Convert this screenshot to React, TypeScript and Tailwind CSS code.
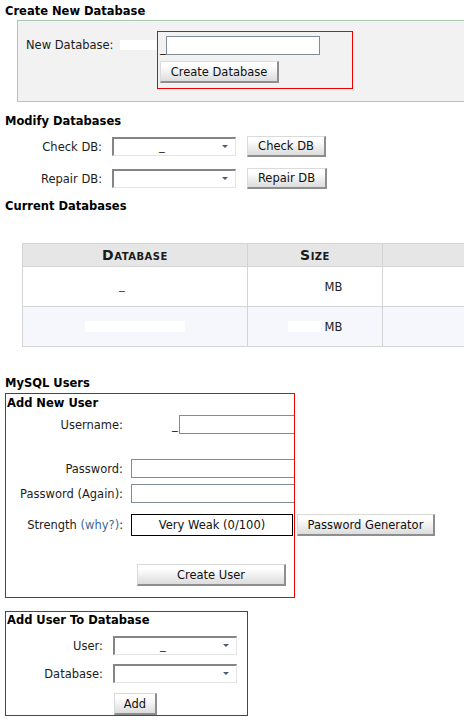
import type { ReactNode } from "react";

function Btn({ className, children }: { className: string; children: ReactNode }) {
  return (
    <button
      type="button"
      className={`flex shrink-0 items-center justify-center bg-linear-to-b from-white from-20% to-[#dcdcdc] border border-[#dadada] border-r-2 border-b-2 border-r-[#8e8e8e] border-b-[#8e8e8e] text-[11.5px] leading-[14px] text-[#111] whitespace-nowrap ${className}`}
    >
      {children}
    </button>
  );
}

function Select({ mark }: { mark?: boolean }) {
  return (
    <div className="relative w-[124px] h-[19px] shrink-0 bg-white border-t-2 border-l-2 border-r border-b border-t-[#858585] border-l-[#858585] border-r-[#e4e4e4] border-b-[#e4e4e4]">
      {mark && <span className="absolute left-[45px] top-[0px] text-[11.5px] leading-[14px] text-[#333]">_</span>}
      <svg className="absolute right-[7px] top-[6px]" width="6" height="3" viewBox="0 0 6 3">
        <path d="M0 0h6L3 3z" fill="#4d5a74" />
      </svg>
    </div>
  );
}

function Field({ className }: { className: string }) {
  return <div className={`h-[19px] shrink-0 bg-white border border-[#7f8b97] ${className}`} />;
}

export default function App() {
  return (
    <div className="w-[464px] min-h-[720px] overflow-hidden bg-white pl-[5px] font-['DejaVu_Sans',sans-serif] text-[11.5px] leading-[14px] text-[#1c1c1c]">
      {/* Create New Database */}
      <h2 className="pt-[4px] font-bold text-black">Create New Database</h2>
      <div className="mt-[2px] ml-[12px] w-[470px] h-[82px] border border-[#a9c9b1] bg-[#f2f2f2] pt-[10px] pl-[8px] flex items-start">
        <div className="w-[131px] shrink-0 mt-[7px] flex items-center">
          <span className="whitespace-nowrap">New Database:</span>
          <span className="ml-[6px] w-[37px] h-[10px] bg-white" />
        </div>
        <div className="w-[196px] h-[58px] shrink-0 border border-solid border-[#ee0000] pt-[4px] pl-[2px]">
          <div className="flex items-end">
            <span className="text-[#222]">_</span>
            <Field className="w-[154px]" />
          </div>
          <Btn className="mt-[6px] w-[119px] h-[22px]">Create Database</Btn>
        </div>
      </div>

      {/* Modify Databases */}
      <h2 className="mt-[12px] font-bold text-black">Modify Databases</h2>
      <div className="mt-[8px] flex items-center h-[21px]">
        <span className="w-[97px] shrink-0 text-right whitespace-nowrap">Check DB:</span>
        <div className="ml-[10px]"><Select mark /></div>
        <Btn className="ml-[11px] w-[79px] h-[21px]">Check DB</Btn>
      </div>
      <div className="mt-[11px] flex items-center h-[21px]">
        <span className="w-[97px] shrink-0 text-right whitespace-nowrap">Repair DB:</span>
        <div className="ml-[10px]"><Select /></div>
        <Btn className="ml-[11px] w-[80px] h-[21px]">Repair DB</Btn>
      </div>

      {/* Current Databases */}
      <h2 className="mt-[10px] font-bold text-black">Current Databases</h2>
      <div className="mt-[30px] ml-[17px] w-[480px] border-t border-l border-[#d4d4d4] grid grid-cols-[225px_135px_120px]">
        {["Database", "Size", ""].map((h) => (
          <div
            key={h || "x"}
            className="h-[23px] bg-[#e6e6e6] border-r border-b border-[#d4d4d4] flex items-center justify-center font-bold text-[14px] tracking-[0.5px] [font-variant:small-caps] text-[#1a1a1a]"
          >
            {h}
          </div>
        ))}
        {["bg-white", "bg-[#f5f7fc]"].map((bg, i) => (
          <div key={bg} className="contents">
            <div className={`h-[40px] border-r border-b border-[#d4d4d4] flex items-center justify-center ${bg}`}>
              <span className="relative w-[100px] h-[11px] bg-white">
                {i === 0 && <span className="absolute left-[34px] -top-[3px] text-[#444]">_</span>}
              </span>
            </div>
            <div className={`h-[40px] border-r border-b border-[#d4d4d4] flex items-center justify-center ${bg}`}>
              <span className="w-[33px] h-[11px] bg-white" />
              <span className="ml-[4px] text-[#222]">MB</span>
            </div>
            <div className={`h-[40px] border-r border-b border-[#d4d4d4] ${bg}`} />
          </div>
        ))}
      </div>

      {/* MySQL Users */}
      <h2 className="mt-[29px] font-bold text-black">MySQL Users</h2>
      <div className="mt-[3px] w-[290px] h-[205px] border border-solid border-[#ee0000] pt-[2px] pl-[1px]">
        <h3 className="font-bold text-black">Add New User</h3>
        <div className="mt-[5px] flex items-center">
          <span className="w-[116px] shrink-0 text-right whitespace-nowrap">Username:</span>
          <span className="ml-[8px] w-[41px] shrink-0" />
          <span className="text-[#222]">_</span>
          <Field className="ml-[1px] w-[115px] border-r-0" />
        </div>
        <div className="mt-[25px] flex items-center">
          <span className="w-[116px] shrink-0 text-right whitespace-nowrap">Password:</span>
          <Field className="ml-[8px] w-[163px] border-r-0" />
        </div>
        <div className="mt-[6px] flex items-center">
          <span className="w-[116px] shrink-0 text-right whitespace-nowrap">Password (Again):</span>
          <Field className="ml-[8px] w-[163px] border-r-0" />
        </div>
        <div className="mt-[11px] flex items-center h-[22px]">
          <span className="w-[116px] shrink-0 text-right whitespace-nowrap">
            Strength <span className="text-[#3a6a96]">(why?)</span>:
          </span>
          <div className="ml-[8px] w-[162px] h-[22px] shrink-0 border border-black bg-white flex items-center justify-center text-[#111] whitespace-nowrap">
            Very Weak (0/100)
          </div>
          <Btn className="ml-[4px] w-[138px] h-[22px]">Password Generator</Btn>
        </div>
        <Btn className="mt-[28px] ml-[130px] w-[149px] h-[22px]">Create User</Btn>
      </div>

      {/* Add User To Database */}
      <div className="mt-[13px] w-[243px] h-[105px] border border-solid border-[#ee0000] pt-[1px] pl-[1px]">
        <h3 className="font-bold text-black">Add User To Database</h3>
        <div className="mt-[9px] flex items-center">
          <span className="w-[96px] shrink-0 text-right whitespace-nowrap">User:</span>
          <div className="ml-[10px]"><Select mark /></div>
        </div>
        <div className="mt-[9px] flex items-center">
          <span className="w-[96px] shrink-0 text-right whitespace-nowrap">Database:</span>
          <div className="ml-[10px]"><Select /></div>
        </div>
        <Btn className="mt-[10px] ml-[107px] w-[43px] h-[22px]">Add</Btn>
      </div>
    </div>
  );
}
